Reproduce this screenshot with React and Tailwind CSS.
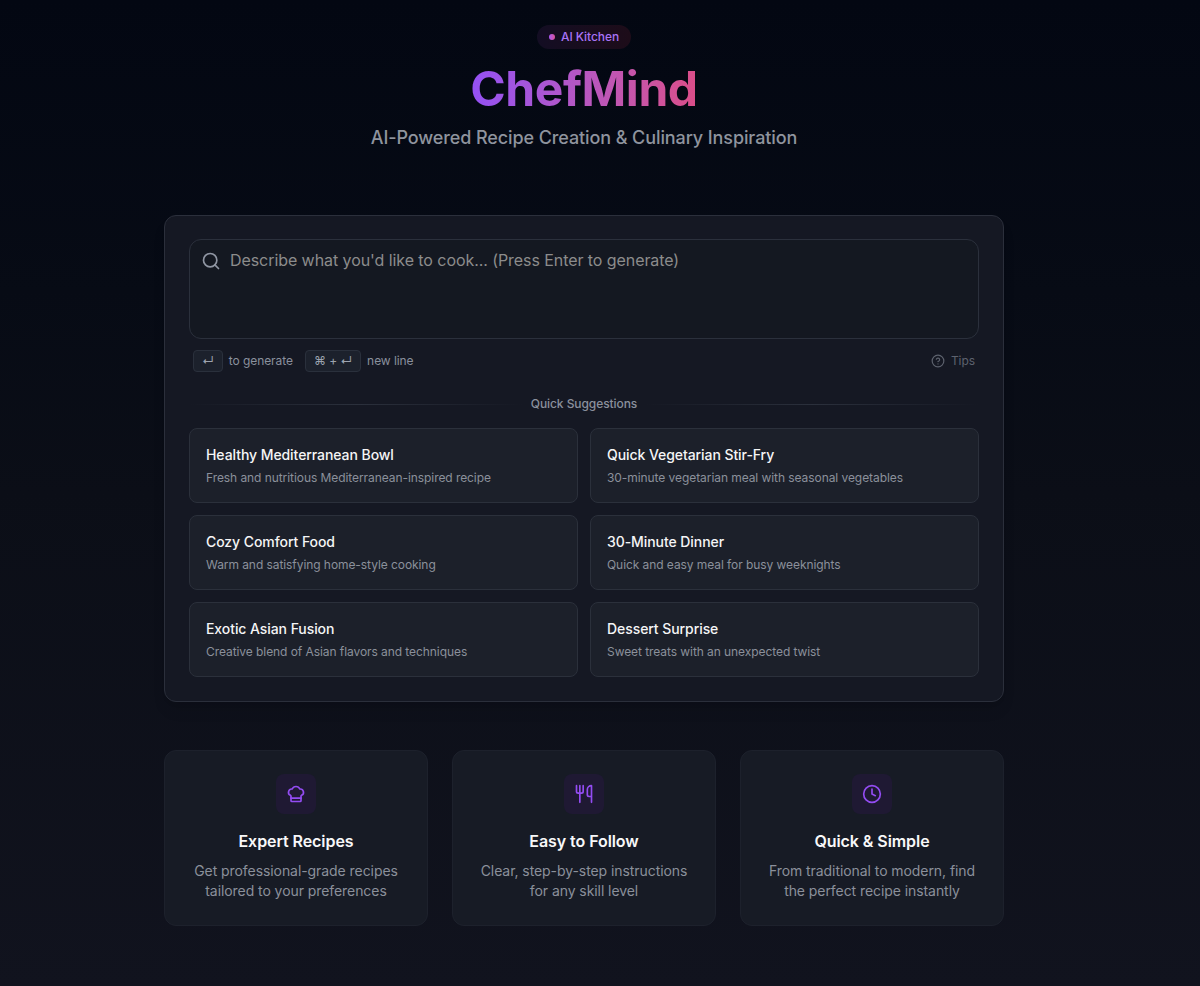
import { ChefHat, Utensils, Clock, Search, CircleHelp } from "lucide-react";

const suggestions = [
  ["Healthy Mediterranean Bowl", "Fresh and nutritious Mediterranean-inspired recipe"],
  ["Quick Vegetarian Stir-Fry", "30-minute vegetarian meal with seasonal vegetables"],
  ["Cozy Comfort Food", "Warm and satisfying home-style cooking"],
  ["30-Minute Dinner", "Quick and easy meal for busy weeknights"],
  ["Exotic Asian Fusion", "Creative blend of Asian flavors and techniques"],
  ["Dessert Surprise", "Sweet treats with an unexpected twist"],
];

const features = [
  { Icon: ChefHat, title: "Expert Recipes", lines: ["Get professional-grade recipes", "tailored to your preferences"] },
  { Icon: Utensils, title: "Easy to Follow", lines: ["Clear, step-by-step instructions", "for any skill level"] },
  { Icon: Clock, title: "Quick & Simple", lines: ["From traditional to modern, find", "the perfect recipe instantly"] },
];

function Key({ children }) {
  return (
    <kbd className="flex h-[22px] items-center rounded border border-[#2a303c] bg-[#1c212c] px-2 pb-px font-['Inter',sans-serif] text-xs leading-none text-[#9ca3af]">
      {children}
    </kbd>
  );
}

export default function App() {
  return (
    <div className="h-[986px] overflow-hidden bg-linear-to-b from-[#030712] via-[#0b0e17] to-[#11131e] pr-8 font-['Inter',sans-serif] tracking-[-0.07px] antialiased">
      <div className="mx-auto flex w-[840px] flex-col pt-[25px]">
        <header className="flex flex-col items-center">
          <div className="flex h-6 items-center gap-1.5 rounded-full bg-linear-to-r from-[#130d23] to-[#1d0c19] px-3 pb-px">
            <span className="size-1.5 rounded-full bg-linear-to-r from-[#a855f7] to-[#db4f94]" />
            <span className="text-xs font-medium text-[#a873f5]">AI Kitchen</span>
          </div>
          <h1 className="mt-[15px] bg-linear-to-r from-[#9450f5] to-[#db4d88] bg-clip-text text-5xl leading-[50px] font-bold tracking-[-0.45px] text-transparent">
            ChefMind
          </h1>
          <p className="mt-2.5 text-lg leading-7 font-medium tracking-[-0.1px] text-[#8f949e]">
            AI-Powered Recipe Creation &amp; Culinary Inspiration
          </p>
        </header>

        <main className="mt-[63px] h-[487px] rounded-xl border border-[#2b2f3b] bg-[#151823] px-6 pt-[23px] shadow-lg">
          <div className="flex h-[100px] items-start gap-[9px] rounded-xl border border-[#2b303c] bg-[#141821] px-[11px] pt-2">
            <Search className="mt-[3px] size-5 text-[#9096a3]" strokeWidth={2} />
            <span className="text-base leading-6 text-[#8c8c8c]">
              Describe what you'd like to cook... (Press Enter to generate)
            </span>
          </div>

          <div className="mt-2.5 flex h-6 items-center px-1 text-xs text-[#8a909d]">
            <Key>↵</Key>
            <span className="ml-1.5 pb-px">to generate</span>
            <span className="ml-3"><Key>⌘ + ↵</Key></span>
            <span className="ml-1.5 pb-px">new line</span>
            <span className="ml-auto flex items-center gap-1.5 pb-px text-[#5d626e]">
              <CircleHelp className="size-3.5" />
              Tips
            </span>
          </div>

          <div className="mt-[23px] flex h-4 items-center gap-2">
            <span className="h-px flex-1 bg-linear-to-r from-transparent via-[#2b303c] to-transparent" />
            <span className="text-xs font-medium text-[#8a909d]">Quick Suggestions</span>
            <span className="h-px flex-1 bg-linear-to-r from-transparent via-[#2b303c] to-transparent" />
          </div>

          <div className="mt-4 grid grid-cols-2 gap-3">
            {suggestions.map(([title, text]) => (
              <div key={title} className="h-[75px] rounded-lg border border-[#2b303b] bg-[#1c202a] px-4 pt-4">
                <h3 className="text-sm leading-5 font-medium text-[#f5f5f6]">{title}</h3>
                <p className="mt-[5px] text-xs leading-4 text-[#8b909b]">{text}</p>
              </div>
            ))}
          </div>
        </main>

        <section className="mt-12 grid grid-cols-3 gap-6">
          {features.map(({ Icon, title, lines }) => (
            <div key={title} className="flex h-[176px] flex-col items-center rounded-xl border border-[#1d212c] bg-[#171b25] pt-[23px]">
              <div className="flex size-10 items-center justify-center rounded-lg bg-[#1f1933] text-[#934cf2]">
                <Icon size={20} />
              </div>
              <h2 className="mt-[15px] text-base leading-6 font-semibold text-[#f8f8f9]">{title}</h2>
              <p className="mt-2 text-center text-sm leading-5 text-[#8b909b]">
                {lines[0]}
                <br />
                {lines[1]}
              </p>
            </div>
          ))}
        </section>
      </div>
    </div>
  );
}
